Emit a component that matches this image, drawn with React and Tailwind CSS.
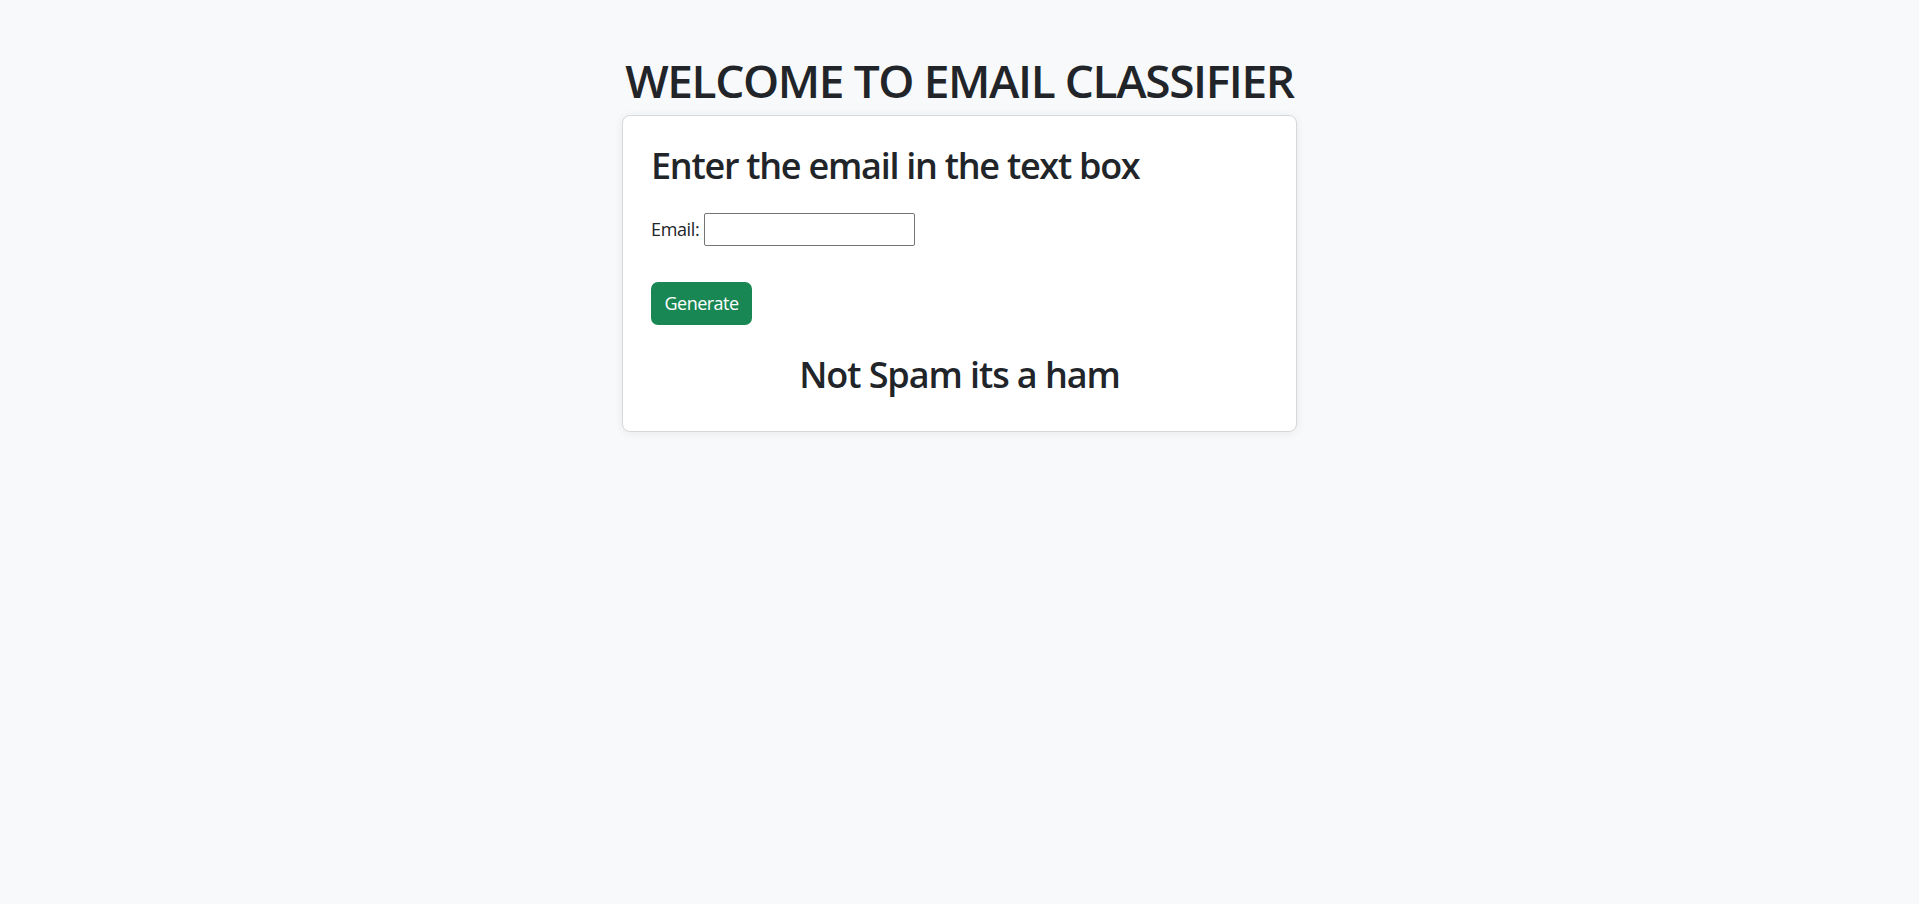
import React, { useState } from "react"

// pagina del clasificador de emails
export default function App() {
  const [email, setEmail] = useState("")
  const [result] = useState("Not Spam its a ham")

  return (
    <div className="min-h-screen w-full bg-[#f8f9fa] flex flex-col items-center text-[#212529] font-['Open_Sans',sans-serif]">
      <h1 className="mt-[53px] text-[46px] leading-[1.2] font-semibold tracking-[-0.03em]">
        WELCOME TO EMAIL CLASSIFIER
      </h1>

      {/* tarjeta principal */}
      <div className="mt-[7px] w-[675px] bg-white border border-[#d6d8da] rounded-[8px] shadow-[0_1px_10px_rgba(0,0,0,0.07)] px-[28px] pt-[28px] pb-[34px]">
        <h2 className="text-[36px] leading-[1.2] font-semibold tracking-[-0.035em]">
          Enter the email in the text box
        </h2>

        <form onSubmit={(e) => e.preventDefault()}>
          <div className="mt-[26px] flex items-center text-[18px] tracking-[-0.02em]">
            <label className="mr-[5px]">Email:</label>
            <input
              type="text"
              value={email}
              onChange={(e) => setEmail(e.target.value)}
              className="w-[211px] h-[33px] border border-[#767676] rounded-[2px] bg-white px-1 outline-none"
            />
          </div>

          <button
            type="submit"
            className="mt-[36px] w-[101px] h-[43px] rounded-[7px] bg-[#198754] text-white text-[18px] tracking-[-0.03em]"
          >
            Generate
          </button>
        </form>

        <h2 className="mt-[28px] text-center text-[36px] leading-[1.2] font-semibold tracking-[-0.03em]">
          {result}
        </h2>
      </div>
    </div>
  )
}
